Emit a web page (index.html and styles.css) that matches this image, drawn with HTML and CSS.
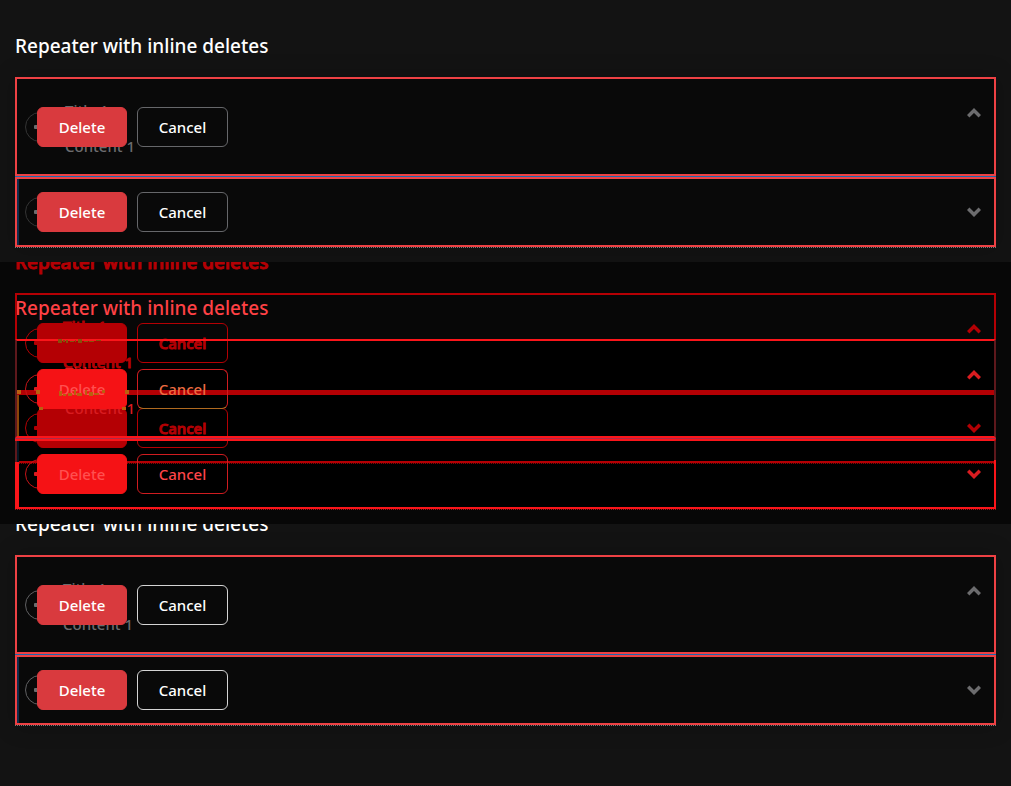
FILE: index.html
```
<!DOCTYPE html>
<html lang="en">
<head>
<meta charset="utf-8">
<title>Repeater with inline deletes</title>
<link rel="stylesheet" href="styles.css">
</head>
<body>
<section class="panel">
  <div class="view">
    <h2 class="heading">Repeater with inline deletes</h2>
    <div class="list">
      <div class="item open">
        <button class="remove" aria-label="Remove row"><svg viewBox="0 0 12 4"><rect width="12" height="4" rx="1"/></svg></button>
        <div class="content"><span>Title 1</span><span>Content 1</span></div>
        <button class="toggle" aria-label="Collapse"><svg viewBox="0 0 14 10"><path d="M1.2 8.200 7 2.5 12.800 8.200"/></svg></button>
        <div class="confirm"><button class="btn delete">Delete</button><button class="btn cancel">Cancel</button></div>
      </div>
      <div class="item closed">
        <button class="remove" aria-label="Remove row"><svg viewBox="0 0 12 4"><rect width="12" height="4" rx="1"/></svg></button>
        <button class="toggle" aria-label="Expand"><svg viewBox="0 0 14 10"><path d="M1.2 1.800 7 7.500 12.800 1.800"/></svg></button>
        <div class="confirm"><button class="btn delete">Delete</button><button class="btn cancel">Cancel</button></div>
      </div>
    </div>
  </div>
</section>

<section class="panel stacked">
  <div class="view raised dark">
    <h2 class="heading">Repeater with inline deletes</h2>
    <div class="list">
      <div class="item open">
        <button class="remove" aria-label="Remove row"><svg viewBox="0 0 12 4"><rect width="12" height="4" rx="1"/></svg></button>
        <div class="content"><span>Title 1</span><span>Content 1</span></div>
        <button class="toggle" aria-label="Collapse"><svg viewBox="0 0 14 10"><path d="M1.2 8.200 7 2.5 12.800 8.200"/></svg></button>
        <div class="confirm"><button class="btn delete" aria-label="Delete"></button><button class="btn cancel">Cancel</button></div>
      </div>
      <div class="item closed">
        <button class="remove" aria-label="Remove row"><svg viewBox="0 0 12 4"><rect width="12" height="4" rx="1"/></svg></button>
        <button class="toggle" aria-label="Expand"><svg viewBox="0 0 14 10"><path d="M1.2 1.800 7 7.500 12.800 1.800"/></svg></button>
        <div class="confirm"><button class="btn delete" aria-label="Delete"></button><button class="btn cancel">Cancel</button></div>
      </div>
    </div>
  </div>
  <div class="view bright">
    <h2 class="heading">Repeater with inline deletes</h2>
    <div class="list">
      <div class="item open">
        <button class="remove" aria-label="Remove row"><svg viewBox="0 0 12 4"><rect width="12" height="4" rx="1"/></svg></button>
        <div class="content"><span>Title 1</span><span>Content 1</span></div>
        <button class="toggle" aria-label="Collapse"><svg viewBox="0 0 14 10"><path d="M1.2 8.200 7 2.5 12.800 8.200"/></svg></button>
        <div class="confirm"><button class="btn delete">Delete</button><button class="btn cancel">Cancel</button></div>
        <svg class="residue" viewBox="0 0 130 102"><path class="thin" d="M41 0h4v4h-4zM46 1h2v2h-2zM49 1h2v3h-2zM53 2h4v1h-4zM58 1h1v2h-1zM61 -1h4v5h-4zM67 2h4v1h-4zM72 2h5v1h-5zM79 1h5v1h-5z"/><path class="thick" d="M42 52h3v5h-3zM46 55h3v2h-3zM51 54h4v3h-4zM57 51h2v5h-2zM60 54h5v3h-5zM68 51h2v5h-2zM72 53h4v4h-4zM77 54h5v2h-5zM85 51h3v3h-3z"/><path class="thick" d="M0 51h4v4h-4zM19 51h4v4h-4zM108 51h4v4h-4zM22 68h4v3h-4zM105 68h4v3h-4z"/></svg>
      </div>
      <div class="item closed">
        <button class="remove" aria-label="Remove row"><svg viewBox="0 0 12 4"><rect width="12" height="4" rx="1"/></svg></button>
        <button class="toggle" aria-label="Expand"><svg viewBox="0 0 14 10"><path d="M1.2 1.800 7 7.500 12.800 1.800"/></svg></button>
        <div class="confirm"><button class="btn delete">Delete</button><button class="btn cancel">Cancel</button></div>
      </div>
    </div>
  </div>
</section>

<section class="panel">
  <div class="view raised light">
    <h2 class="heading">Repeater with inline deletes</h2>
    <div class="list">
      <div class="item open">
        <button class="remove" aria-label="Remove row"><svg viewBox="0 0 12 4"><rect width="12" height="4" rx="1"/></svg></button>
        <div class="content"><span>Title 1</span><span>Content 1</span></div>
        <button class="toggle" aria-label="Collapse"><svg viewBox="0 0 14 10"><path d="M1.2 8.200 7 2.5 12.800 8.200"/></svg></button>
        <div class="confirm"><button class="btn delete">Delete</button><button class="btn cancel">Cancel</button></div>
      </div>
      <div class="item closed">
        <button class="remove" aria-label="Remove row"><svg viewBox="0 0 12 4"><rect width="12" height="4" rx="1"/></svg></button>
        <button class="toggle" aria-label="Expand"><svg viewBox="0 0 14 10"><path d="M1.2 1.800 7 7.500 12.800 1.800"/></svg></button>
        <div class="confirm"><button class="btn delete">Delete</button><button class="btn cancel">Cancel</button></div>
      </div>
    </div>
  </div>
</section>
</body>
</html>
```
FILE: styles.css
```
* { box-sizing: border-box; }
body {
  margin: 0;
  min-height: 100vh;
  display: grid;
  grid-template-rows: repeat(3, 1fr);
  background: #131313;
  font-family: "Noto Sans", "Open Sans", sans-serif;
}
.panel { display: grid; align-items: start; overflow: hidden; }
.stacked { background: #070707; }
.view {
  --edge: #ee4144;
  --split: #1b69ae;
  --strip: #102c4c;
  --fill: #090909;
  --end: #777;
  --ring: #343434;
  --muted: #6c6c6e;
  --title: #fff;
  --danger: #d93a3e;
  --danger-text: #fff;
  --cancel: #66676a;
  --cancel-text: #fff;
  --gap: 10px;
  grid-area: 1 / 1;
  padding: 31px 15px 0;
}
.raised { margin-top: -46px; }
.light { --cancel: #d4d4d4; --ring: #606062; --gap: 8px; }
.dark {
  --edge: #b40004; --split: #b40004; --strip: #8c4508; --fill: #000;
  --end: #8c0000; --ring: #b40004; --muted: #b40004; --title: #b40004;
  --danger: #b40004; --cancel: #b40004; --cancel-text: #b40004; --gap: 8px;
}
.bright {
  --edge: #fb151a; --split: #a82b4a; --strip: #fb151a; --fill: transparent;
  --end: #a01015; --ring: #c41418; --muted: #d91c20; --title: #ff4145;
  --danger: #f51215; --danger-text: #ff5050; --cancel: #d01c20; --cancel-text: #ff4549;
}
.heading {
  margin: 0 0 16px;
  color: var(--title);
  font-size: 19px;
  font-weight: 500;
  line-height: 30px;
}
.list { position: relative; border-bottom: 1px dotted var(--end); box-shadow: 0 0 20px rgba(0, 0, 0, .25); }
.stacked .list { box-shadow: none; }
.item {
  position: relative;
  display: flex;
  align-items: center;
  gap: var(--gap);
  min-height: 70px;
  padding: 0 13px 0 8px;
  border: 2px solid var(--edge);
  background: var(--fill);
}
.open { margin-bottom: 1px; }
.open::after {
  content: "";
  position: absolute;
  left: -2px;
  right: -2px;
  bottom: -3px;
  height: 1px;
  background: var(--split);
}
.closed { background: linear-gradient(90deg, var(--strip) 2px, var(--fill) 2px); }
.content {
  display: flex;
  flex-direction: column;
  gap: 12px;
  padding: 19px 0 16px;
  color: var(--muted);
  font-size: 15px;
  font-weight: 500;
  line-height: 24px;
}
button { padding: 0; background: none; font-family: inherit; cursor: pointer; }
.remove {
  display: grid;
  place-items: center;
  width: 30px;
  height: 30px;
  border: 1px solid var(--ring);
  border-radius: 50%;
}
.remove svg { width: 12px; height: 4px; fill: var(--muted); }
.toggle { display: flex; margin-left: auto; border: 0; }
.open .toggle { align-self: flex-start; margin-top: 29px; }
.toggle svg { width: 14px; height: 10px; fill: none; stroke: var(--muted); stroke-width: 3.5; }
.confirm {
  position: absolute;
  inset: 0 auto 0 20px;
  display: flex;
  align-items: center;
  gap: 10px;
}
.btn {
  min-width: 90px;
  height: 40px;
  padding: 0 20px;
  border: 1px solid var(--cancel);
  border-radius: 6px;
  color: var(--cancel-text);
  font-size: 15px;
  font-weight: 500;
}
.cancel { min-width: 91px; }
.delete { border-color: var(--danger); background: var(--danger); color: var(--danger-text); }
.dark .heading, .dark .cancel, .dark .content { -webkit-text-stroke: 1px currentColor; }
.dark .open { background: linear-gradient(transparent 44px, #000 44px); }
.dark .closed { border-left-color: transparent; }
.bright .open { border-left-color: #5e181c; border-right-color: #5e181c; }
.bright .open .cancel { border-bottom-color: #b06a20; color: #ed6c42; }
.bright .closed {
  border-left: 0;
  border-right-color: transparent;
  padding-left: 10px;
  background:
    linear-gradient(#5e181c 21px, #fb151a 21px) 0 0 / 2px 100% no-repeat,
    linear-gradient(#041522 21px, #fb151a 21px) 2px 0 / 2px 100% no-repeat,
    linear-gradient(#5e181c 21px, #fb151a 21px) border-box 100% 0 / 2px 100% no-repeat,
    linear-gradient(transparent 23px, #000 23px);
}
.bright .closed .confirm { left: 22px; }
.residue { position: absolute; left: 0; top: -2px; width: 130px; height: 102px; pointer-events: none; }
.thin { fill: #86500a; }
.thick { fill: #b9600f; }
```
